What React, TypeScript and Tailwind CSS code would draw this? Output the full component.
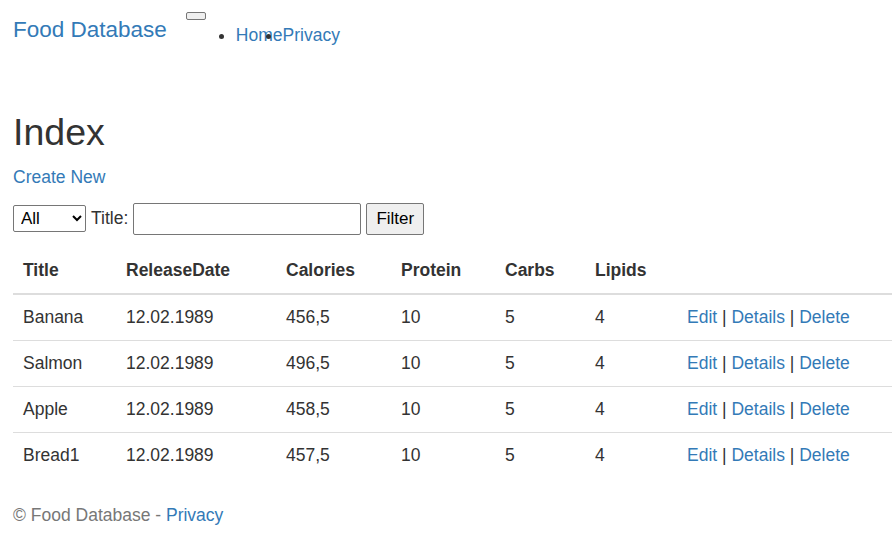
import React from 'react';

const foods = [
  { title: 'Banana', date: '12.02.1989', calories: '456,5', protein: 10, carbs: 5, lipids: 4 },
  { title: 'Salmon', date: '12.02.1989', calories: '496,5', protein: 10, carbs: 5, lipids: 4 },
  { title: 'Apple', date: '12.02.1989', calories: '458,5', protein: 10, carbs: 5, lipids: 4 },
  { title: 'Bread1', date: '12.02.1989', calories: '457,5', protein: 10, carbs: 5, lipids: 4 },
];

export default function App() {
  return (
    <div className="min-h-screen bg-white text-[#333] text-[17.5px] leading-[1.43] font-['Liberation_Sans',Arial,sans-serif] overflow-hidden">
      {/* Navbar (unstyled bootstrap) */}
      <div className="flex items-start pl-[13px] pt-[14px] h-[61px]">
        <a className="text-[#337ab7] text-[22.5px] leading-[32px] whitespace-nowrap">Food Database</a>
        <button className="ml-[19px] mt-[-2px] w-[20px] h-[8px] rounded-[2px] border border-[#767676] bg-[#efefef]" />
        <ul className="flex list-disc pl-[30px] mt-[9px]">
          <li className="text-[#337ab7] marker:text-[#333] list-disc">
            <a>Home</a>
          </li>
          <li className="text-[#337ab7] marker:text-[#333] list-disc">
            <a>Privacy</a>
          </li>
        </ul>
      </div>

      <div className="pl-[13px]">
        <h2 className="text-[37.5px] leading-[1.1] mt-[51px] mb-[12px]">Index</h2>
        <p className="mb-[12px]">
          <a className="text-[#337ab7]">Create New</a>
        </p>

        {/* Filter form */}
        <form className="flex items-center gap-[5px] h-[33px]">
          <select className="w-[73px] h-[27px] border border-[#767676] rounded-[2px] pl-[3px] text-[17px] text-black bg-white">
            <option>All</option>
          </select>
          <label className="text-[17.5px]">Title:</label>
          <input className="w-[228px] h-[32px] border border-[#767676] rounded-[2px] bg-white" />
          <button type="button" className="w-[58px] h-[32px] border border-[#767676] rounded-[2px] bg-[#efefef] text-[17px] text-black">
            Filter
          </button>
        </form>

        {/* Table */}
        <table className="w-[879px] mt-[12px] border-collapse text-left">
          <thead>
            <tr className="border-b-2 border-[#ddd] h-[47px]">
              <th className="w-[103px] px-[10px] font-bold">Title</th>
              <th className="w-[160px] px-[10px] font-bold">ReleaseDate</th>
              <th className="w-[115px] px-[10px] font-bold">Calories</th>
              <th className="w-[104px] px-[10px] font-bold">Protein</th>
              <th className="w-[90px] px-[10px] font-bold">Carbs</th>
              <th className="w-[92px] px-[10px] font-bold">Lipids</th>
              <th className="px-[10px]"></th>
            </tr>
          </thead>
          <tbody>
            {foods.map((f, i) => (
              <tr key={f.title} className={`h-[46px] ${i < foods.length - 1 ? 'border-b border-[#ddd]' : ''}`}>
                <td className="px-[10px]">{f.title}</td>
                <td className="px-[10px]">{f.date}</td>
                <td className="px-[10px]">{f.calories}</td>
                <td className="px-[10px]">{f.protein}</td>
                <td className="px-[10px]">{f.carbs}</td>
                <td className="px-[10px]">{f.lipids}</td>
                <td className="px-[10px] whitespace-nowrap">
                  <a className="text-[#337ab7]">Edit</a> | <a className="text-[#337ab7]">Details</a> |{' '}
                  <a className="text-[#337ab7]">Delete</a>
                </td>
              </tr>
            ))}
          </tbody>
        </table>

        {/* Footer */}
        <footer className="mt-[25px] text-[#777]">
          © Food Database - <a className="text-[#337ab7]">Privacy</a>
        </footer>
      </div>
    </div>
  );
}
